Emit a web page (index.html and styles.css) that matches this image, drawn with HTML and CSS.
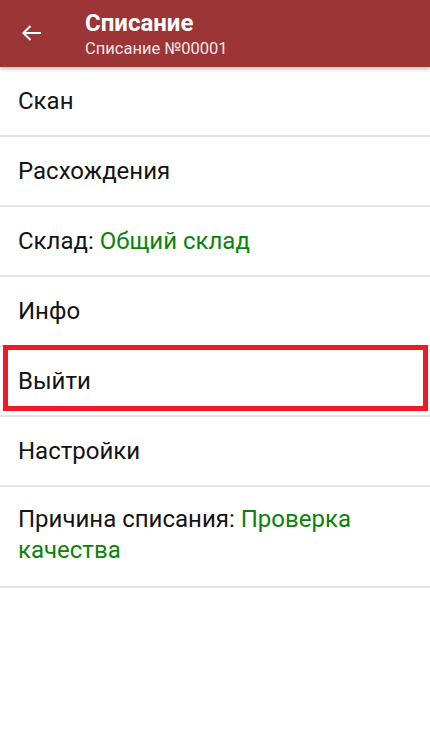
FILE: index.html
```html
<!DOCTYPE html>
<html>
	<head>
		<title>Списание</title>
		<link rel="stylesheet" href="styles.css">
	</head>
	<body>
		<div class="toolbar">
			<svg class="back" width="24" height="24" viewBox="0 0 24 24">
				<path d="M3 12H21M10.5 5L3.4 12L10.5 19" fill="none" stroke="#fff" stroke-width="2" />
			</svg>
			<div class="titles">
				<div class="title">Списание</div>
				<div class="subtitle">Списание №00001</div>
			</div>
		</div>
		<div class="menu">
			<div class="item">Скан</div>
			<div class="item">Расхождения</div>
			<div class="item">Склад: <span class="value">Общий склад</span></div>
			<div class="item">Инфо</div>
			<div class="item marked">Выйти</div>
			<div class="item">Настройки</div>
			<div class="item tall"><span>Причина списания:</span> <span class="value">Проверка качества</span></div>
		</div>
	</body>
</html>
```

FILE: styles.css
```css
body {
	margin: 0;
	font-family: Roboto, "Noto Sans", sans-serif;
	background: #fff;
}
.toolbar {
	height: 67px;
	background-color: #9b3536;
	display: flex;
	align-items: center;
	box-shadow: 0 2px 4px rgba(0, 0, 0, 0.25);
	position: relative;
}
.back {
	margin-left: 20px;
	margin-right: 41px;
	margin-top: -1px;
}
.titles {
	color: #fff;
	padding-top: 1px;
}
.title {
	font-size: 24px;
	font-weight: bold;
	line-height: 29px;
}
.subtitle {
	font-size: 16.5px;
	line-height: 22px;
	color: #f3e6e6;
}
.item {
	height: 68px;
	display: flex;
	align-items: center;
	padding: 0 18px;
	font-size: 24px;
	color: #141414;
	border-bottom: 2px solid #e4e4e4;
	position: relative;
}
.item .value {
	color: #0b820b;
	margin-left: 6px;
}
.item.tall {
	display: block;
	height: auto;
	padding-top: 17px;
	padding-bottom: 20px;
	line-height: 31px;
	padding-right: 60px;
}
.item.tall .value {
	margin-left: 0;
}
.marked::after {
	content: "";
	position: absolute;
	left: 3px;
	right: 2px;
	top: -2px;
	bottom: 4px;
	border: 5px solid #ed1c24;
}
```
